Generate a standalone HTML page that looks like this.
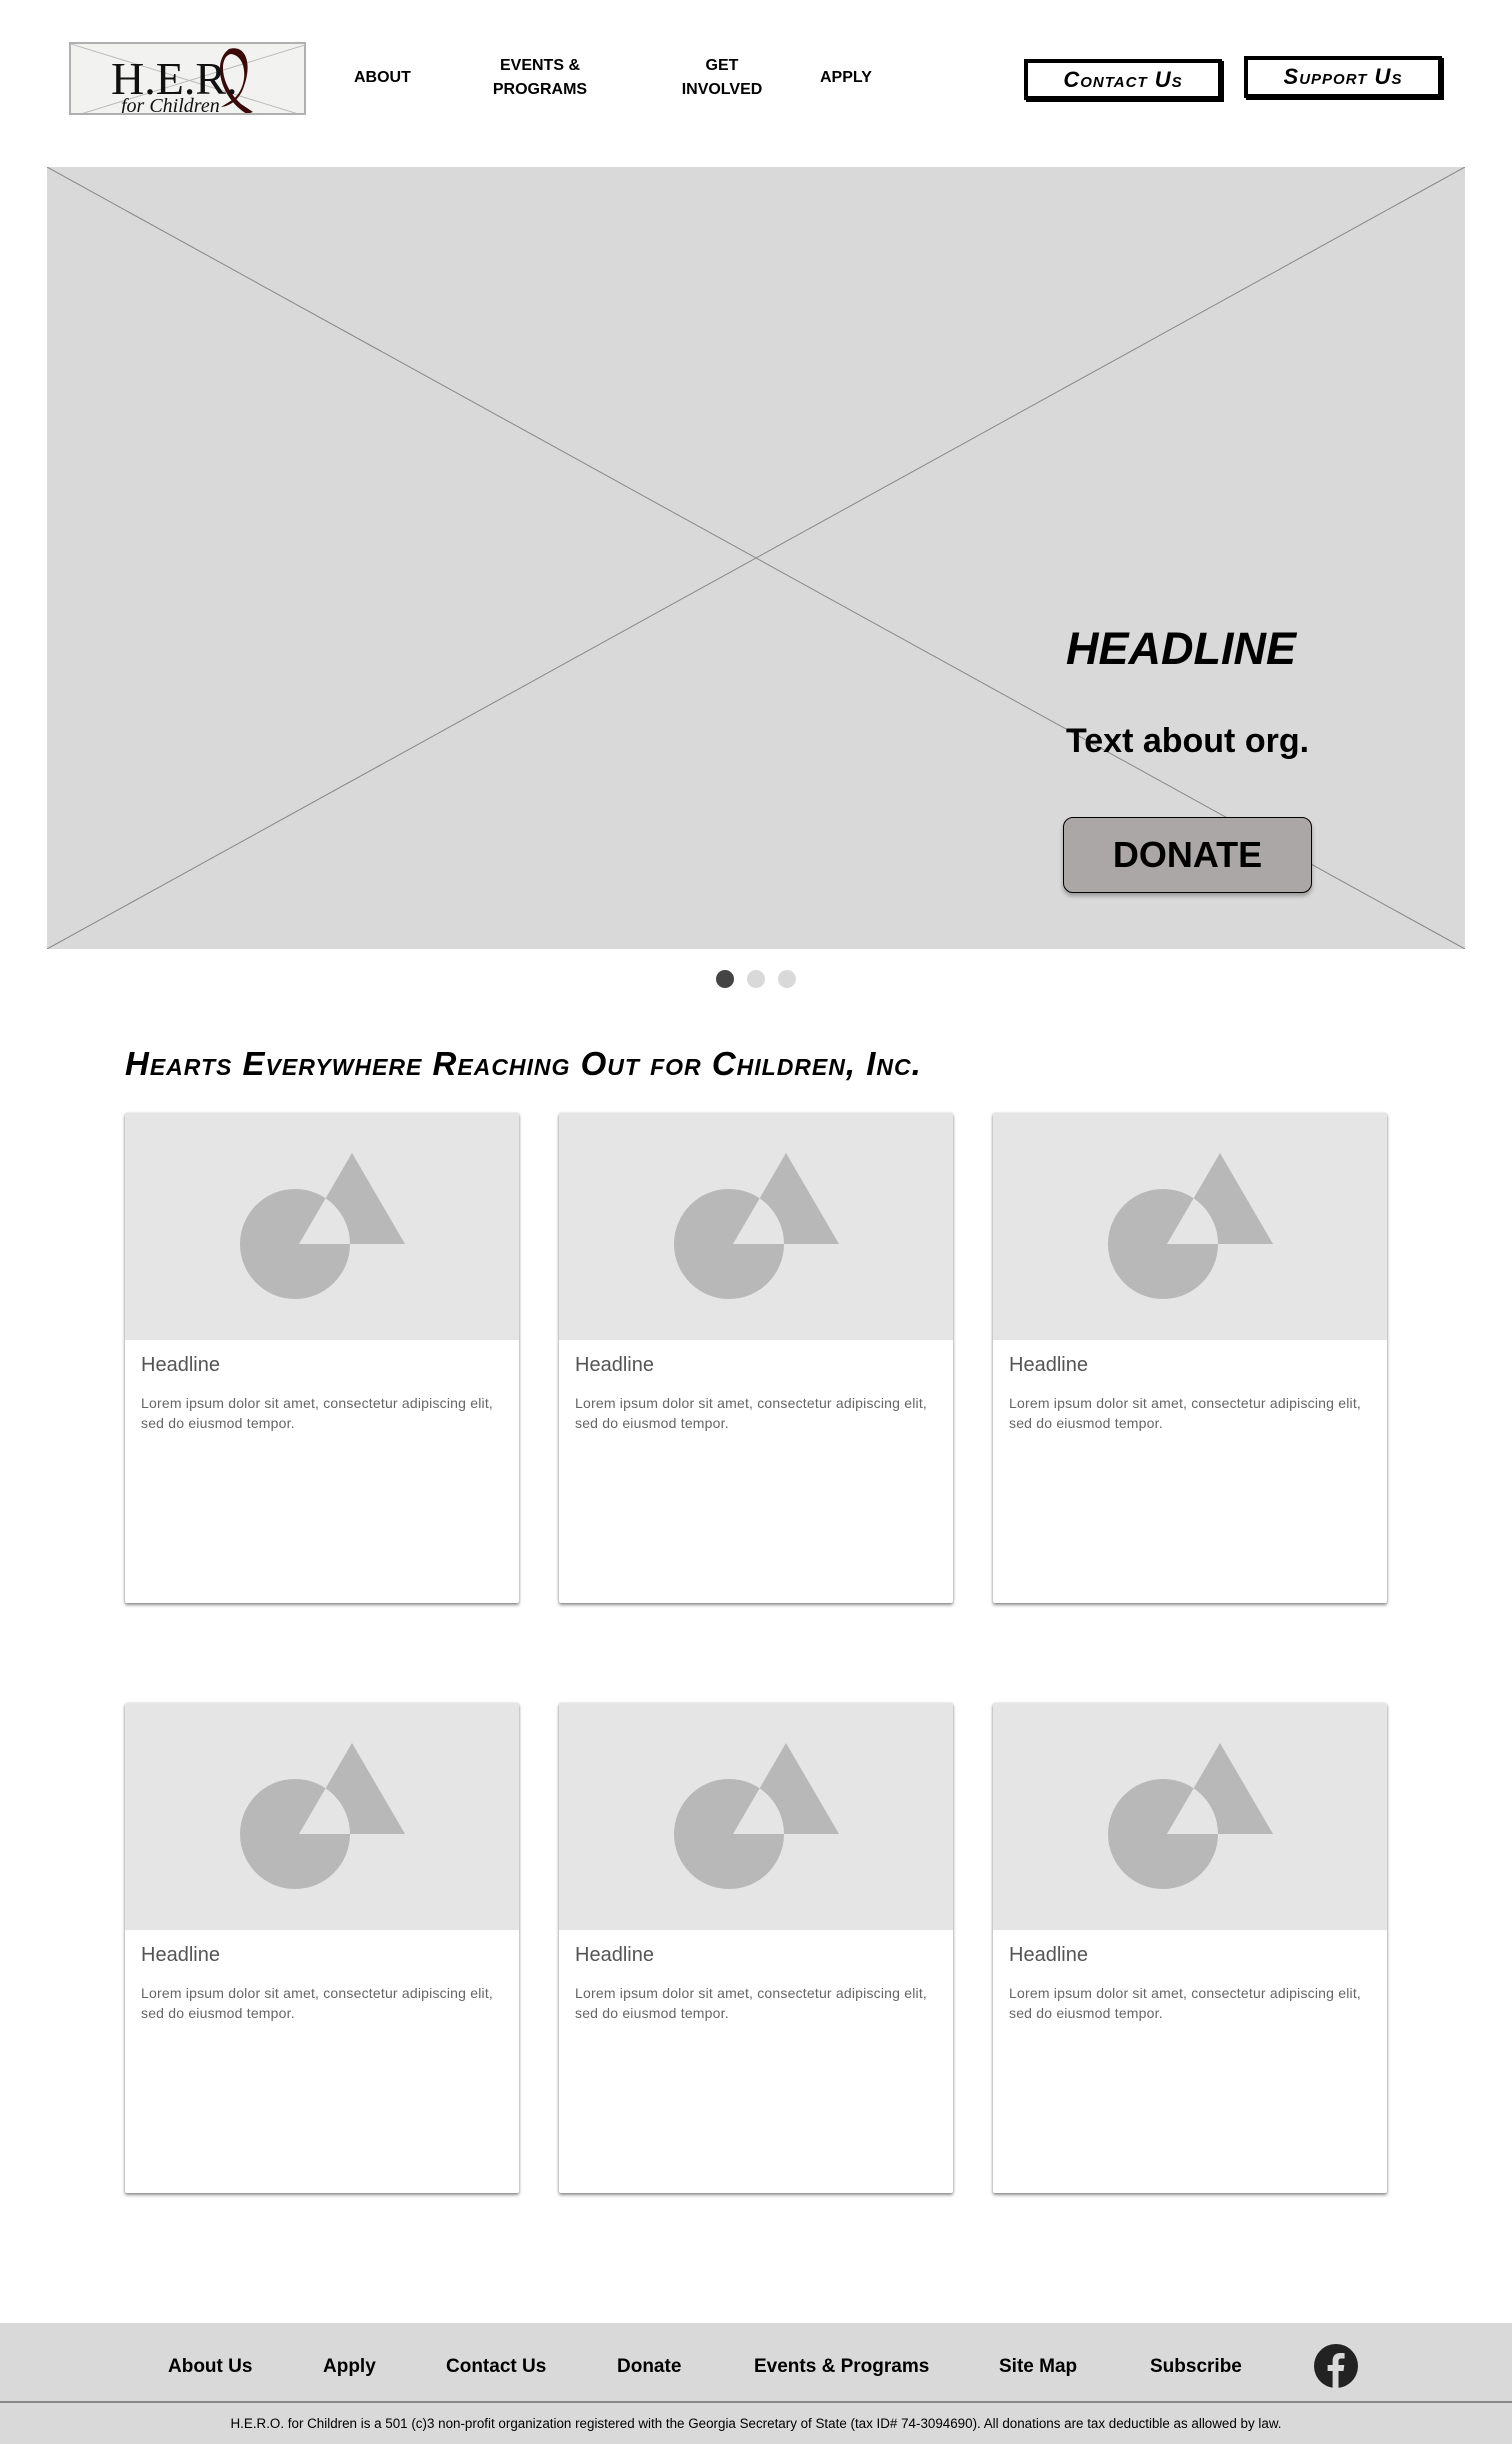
<!DOCTYPE html>
<html><head><meta charset="utf-8"><style>
*{box-sizing:border-box;margin:0;padding:0}
body{width:1512px;height:2444px;background:#fff;font-family:"Liberation Sans",sans-serif;position:relative;overflow:hidden}
.abs{position:absolute}
.nav{font-weight:bold;font-size:16px;color:#000;text-align:center;line-height:24px}
.btn{position:absolute;border:4px solid #000;font-family:"Liberation Sans",sans-serif;font-style:italic;font-weight:900;font-size:22px;display:flex;align-items:center;justify-content:center;font-variant:small-caps;letter-spacing:1px;box-shadow:2px 2px 0 #000}
.card{position:absolute;width:394px;height:490px;background:#fff;box-shadow:0 2px 3px rgba(0,0,0,.45),0 0 2px rgba(0,0,0,.15);border-radius:2px;overflow:hidden}
.card .img{height:227px;background:#e5e5e5;position:relative}
.card h3{font-weight:normal;font-size:20px;color:#555;margin:14px 0 0 16px}
.card p{font-size:14px;color:#666;line-height:20px;margin:16px 16px 0 16px;letter-spacing:.2px}
.fl{position:absolute;top:2356px;font-weight:bold;font-size:19px;color:#000}
</style></head><body>
<div class="abs" style="left:69px;top:42px;width:237px;height:73px;background:#f2f2f0;border:2px solid #b0b0b0;overflow:hidden">
<svg width="237" height="73" class="abs" style="left:0;top:0"><line x1="0" y1="0" x2="237" y2="73" stroke="#bbb"/><line x1="237" y1="0" x2="0" y2="73" stroke="#bbb"/>
<path d="M158 5 C175 0 182 20 172 45 C168 55 160 62 150 63 L158 58 C178 48 178 12 160 10 C148 12 148 40 170 60 L182 68 L176 70 C150 55 140 18 158 5Z" fill="#3a0a0a"/>
<text x="40" y="50" font-family="Liberation Serif" font-size="46" fill="#111">H.E.R.</text>
<text x="50" y="68" font-family="Liberation Serif" font-style="italic" font-size="20" fill="#111">for Children</text></svg></div>
<div class="abs nav" style="left:354px;top:66px">ABOUT</div>
<div class="abs nav" style="left:480px;top:54px;width:120px">EVENTS &amp;<br>PROGRAMS</div>
<div class="abs nav" style="left:662px;top:54px;width:120px">GET<br>INVOLVED</div>
<div class="abs nav" style="left:820px;top:66px">APPLY</div>
<div class="btn" style="left:1024px;top:59px;width:198px;height:41px">Contact Us</div>
<div class="btn" style="left:1244px;top:56px;width:198px;height:42px">Support Us</div>
<div class="abs" style="left:47px;top:167px;width:1418px;height:782px;background:#d9d9d9">
<svg width="1418" height="782" class="abs"><line x1="0" y1="0" x2="1418" y2="782" stroke="#888"/><line x1="1418" y1="0" x2="0" y2="782" stroke="#888"/></svg></div>
<div class="abs" style="left:1066px;top:623px;font-size:45px;font-weight:900;font-style:italic;color:#000">HEADLINE</div>
<div class="abs" style="left:1066px;top:722px;font-size:34px;font-weight:bold;color:#000">Text about org.</div>
<div class="abs" style="left:1063px;top:817px;width:249px;height:76px;background:#aba7a6;border:1.5px solid #000;border-radius:10px;box-shadow:0 3px 4px rgba(0,0,0,.3);display:flex;align-items:center;justify-content:center;font-size:36px;font-weight:bold">DONATE</div>
<div class="abs" style="left:716px;top:970px;width:18px;height:18px;border-radius:50%;background:#444"></div>
<div class="abs" style="left:747px;top:970px;width:18px;height:18px;border-radius:50%;background:#d9d9d9"></div>
<div class="abs" style="left:778px;top:970px;width:18px;height:18px;border-radius:50%;background:#d9d9d9"></div>
<div class="abs" style="left:125px;top:1045px;font-size:33px;font-weight:900;font-style:italic;font-variant:small-caps;letter-spacing:1px">Hearts Everywhere Reaching Out for Children, Inc.</div>
<svg width="0" height="0" style="position:absolute"><defs>
<g id="sh"><circle cx="170" cy="131" r="55" fill="#b8b8b8"/><polygon points="227,40 280,131 174,131" fill="#b8b8b8"/>
<clipPath id="cc"><circle cx="170" cy="131" r="55"/></clipPath>
<polygon points="227,40 280,131 174,131" fill="#e5e5e5" clip-path="url(#cc)"/></g></defs></svg>
<div class="card" style="left:125px;top:1113px"><div class="img"><svg width="394" height="227"><use href="#sh"/></svg></div><h3>Headline</h3><p>Lorem ipsum dolor sit amet, consectetur adipiscing elit, sed do eiusmod tempor.</p></div>
<div class="card" style="left:559px;top:1113px"><div class="img"><svg width="394" height="227"><use href="#sh"/></svg></div><h3>Headline</h3><p>Lorem ipsum dolor sit amet, consectetur adipiscing elit, sed do eiusmod tempor.</p></div>
<div class="card" style="left:993px;top:1113px"><div class="img"><svg width="394" height="227"><use href="#sh"/></svg></div><h3>Headline</h3><p>Lorem ipsum dolor sit amet, consectetur adipiscing elit, sed do eiusmod tempor.</p></div>
<div class="card" style="left:125px;top:1703px"><div class="img"><svg width="394" height="227"><use href="#sh"/></svg></div><h3>Headline</h3><p>Lorem ipsum dolor sit amet, consectetur adipiscing elit, sed do eiusmod tempor.</p></div>
<div class="card" style="left:559px;top:1703px"><div class="img"><svg width="394" height="227"><use href="#sh"/></svg></div><h3>Headline</h3><p>Lorem ipsum dolor sit amet, consectetur adipiscing elit, sed do eiusmod tempor.</p></div>
<div class="card" style="left:993px;top:1703px"><div class="img"><svg width="394" height="227"><use href="#sh"/></svg></div><h3>Headline</h3><p>Lorem ipsum dolor sit amet, consectetur adipiscing elit, sed do eiusmod tempor.</p></div>
<div class="abs" style="left:0;top:2323px;width:1512px;height:121px;background:#d9d9d9"></div>
<div class="abs" style="left:0;top:2401px;width:1512px;height:2px;background:#888"></div>
<div class="fl" style="left:168px">About Us</div>
<div class="fl" style="left:323px">Apply</div>
<div class="fl" style="left:446px">Contact Us</div>
<div class="fl" style="left:617px">Donate</div>
<div class="fl" style="left:754px">Events &amp; Programs</div>
<div class="fl" style="left:999px">Site Map</div>
<div class="fl" style="left:1150px">Subscribe</div>
<svg class="abs" style="left:1314px;top:2344px" width="44" height="44" viewBox="0 0 44 44"><circle cx="22" cy="22" r="22" fill="#222"/><path d="M24.5 44V27h5l.8-6h-5.8v-3.6c0-1.7.5-2.9 3-2.9h3.1V9.2c-.5-.1-2.4-.2-4.5-.2-4.5 0-7.5 2.7-7.5 7.7V21h-5v6h5v17z" fill="#d9d9d9"/></svg>
<div class="abs" style="left:0;top:2416px;width:1512px;text-align:center;font-size:13.4px;color:#000">H.E.R.O. for Children is a 501 (c)3 non-profit organization registered with the Georgia Secretary of State (tax ID# 74-3094690). All donations are tax deductible as allowed by law.</div>
</body></html>
